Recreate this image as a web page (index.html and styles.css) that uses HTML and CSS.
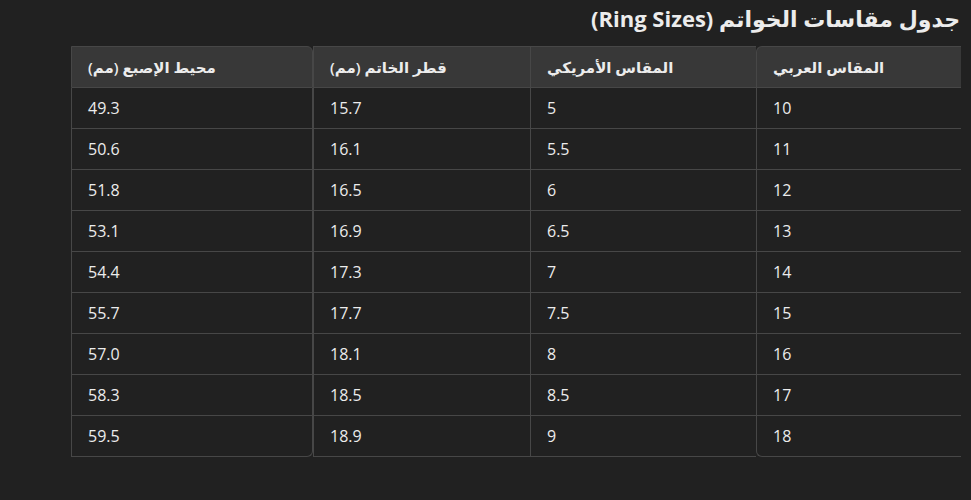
FILE: index.html
```html
<!DOCTYPE html>
<html lang="ar" dir="rtl">
<head>
<meta charset="utf-8">
<link rel="stylesheet" href="styles.css">
</head>
<body>
<main class="content">
  <h3 class="title">جدول مقاسات الخواتم (Ring Sizes)</h3>
  <table class="sizes">
    <colgroup>
      <col class="c-arab">
      <col class="c-us">
      <col class="c-diam">
      <col class="c-circ">
    </colgroup>
    <thead>
      <tr><th>المقاس العربي</th><th>المقاس الأمريكي</th><th>قطر الخاتم (مم)</th><th>محيط الإصبع (مم)</th></tr>
    </thead>
    <tbody>
      <tr><td>10</td><td>5</td><td>15.7</td><td>49.3</td></tr>
      <tr><td>11</td><td>5.5</td><td>16.1</td><td>50.6</td></tr>
      <tr><td>12</td><td>6</td><td>16.5</td><td>51.8</td></tr>
      <tr><td>13</td><td>6.5</td><td>16.9</td><td>53.1</td></tr>
      <tr><td>14</td><td>7</td><td>17.3</td><td>54.4</td></tr>
      <tr><td>15</td><td>7.5</td><td>17.7</td><td>55.7</td></tr>
      <tr><td>16</td><td>8</td><td>18.1</td><td>57.0</td></tr>
      <tr><td>17</td><td>8.5</td><td>18.5</td><td>58.3</td></tr>
      <tr><td>18</td><td>9</td><td>18.9</td><td>59.5</td></tr>
    </tbody>
  </table>
</main>
</body>
</html>
```
FILE: styles.css
```css
html, body {
  margin: 0;
  padding: 0;
  background: #212121;
  color: #ececec;
  font-family: "Open Sans", "Noto Sans", "DejaVu Sans", sans-serif;
}

.content {
  padding: 3px 10px 0 71px;
}

.title {
  margin: 0 0 12px 0;
  padding-right: 1px;
  font-size: 22px;
  line-height: 31px;
  font-weight: 700;
  text-align: right;
}

.sizes {
  width: 890px;
  table-layout: fixed;
  border-collapse: separate;
  border-spacing: 0;
  font-size: 16px;
  line-height: 24px;
}

.c-arab { width: 205px; }
.c-us { width: 226px; }
.c-diam { width: 217px; }
.c-circ { width: 242px; }

.sizes th,
.sizes td {
  padding: 8px 16px;
  text-align: left;
  border: 0 solid #474747;
  border-bottom-width: 1px;
  border-left-width: 1px;
}

.sizes th {
  background: #383838;
  border-top-width: 1px;
  font-weight: 600;
  font-size: 15px;
}

.sizes th:first-child { border-top-left-radius: 6px; }
.sizes th:last-child { border-right-width: 1px; border-top-right-radius: 6px; }
.sizes td:last-child { border-right-width: 1px; }
.sizes tbody tr:last-child td:first-child { border-bottom-left-radius: 6px; }
.sizes tbody tr:last-child td:last-child { border-bottom-right-radius: 6px; }
```
